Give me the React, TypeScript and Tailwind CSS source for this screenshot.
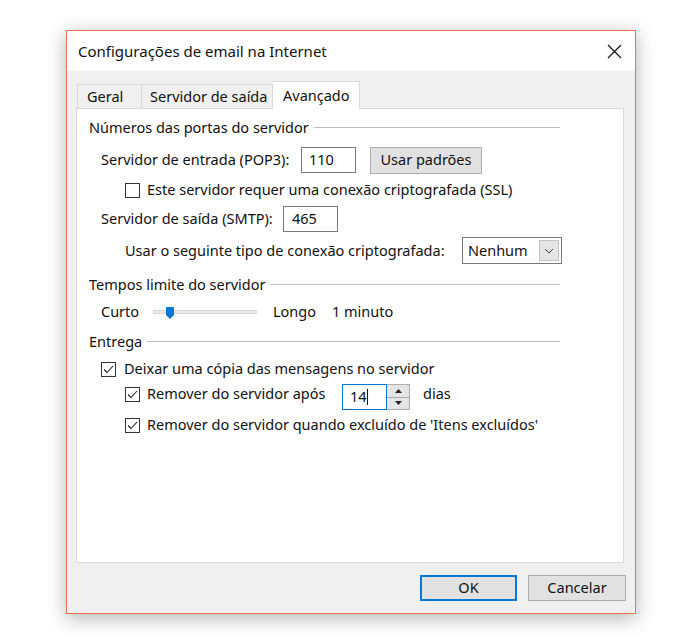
import React from "react";

const font = { fontFamily: '"Noto Sans", "Open Sans", sans-serif' };

function CheckBox({ checked }: { checked?: boolean }) {
  return (
    <div className="w-[15px] h-[15px] border border-[#333] bg-white flex items-center justify-center shrink-0">
      {checked && (
        <svg width="13" height="13" viewBox="0 0 13 13">
          <path d="M2 6.5 L5 9.5 L11 3" fill="none" stroke="#222" strokeWidth="1.1" />
        </svg>
      )}
    </div>
  );
}

function GroupHeading({ label, mt }: { label: string; mt: string }) {
  return (
    <div className={`flex items-center h-[20px] pl-[12px] pr-[63px] ${mt}`}>
      <span className="whitespace-nowrap">{label}</span>
      <div className="flex-1 ml-[5px] h-[2px] border-t border-[#bdbdbd] border-b-white" />
    </div>
  );
}

function TextBox({ value, className }: { value: string; className: string }) {
  return (
    <div className={`h-[26px] border border-[#7a7a7a] bg-white flex items-center pl-[7px] ${className}`}>
      {value}
    </div>
  );
}

export default function App() {
  return (
    <div className="w-[700px] h-[644px] bg-white text-[14.5px] text-[#111] overflow-hidden" style={font}>
      <div className="ml-[66px] mt-[30px] w-[570px] h-[584px] border border-[#e4754f] bg-[#f0f0f0] flex flex-col shadow-[0_4px_18px_rgba(0,0,0,0.3)]">
        {/* title bar */}
        <div className="h-[40px] bg-white flex items-center justify-between pl-[11px] pr-[13px] shrink-0">
          <span className="text-[15px]">Configurações de email na Internet</span>
          <svg width="15" height="15" viewBox="0 0 15 15">
            <path d="M1 1 L14 14 M14 1 L1 14" stroke="#111" strokeWidth="1.2" />
          </svg>
        </div>

        {/* tabs */}
        <div className="mt-[10px] h-[27px] flex items-end pl-[10px] shrink-0 relative z-10">
          <div className="h-[24px] w-[65px] border border-b-0 border-[#d9d9d9] flex items-center pl-[9px]">Geral</div>
          <div className="h-[24px] w-[131px] border border-l-0 border-b-0 border-[#d9d9d9] flex items-center pl-[8px]">
            Servidor de saída
          </div>
          <div className="h-[28px] w-[87px] -mb-px bg-white border border-l-0 border-b-0 border-[#d9d9d9] flex items-start pt-[3px] pl-[10px]">
            Avançado
          </div>
        </div>

        {/* panel */}
        <div className="ml-[9px] w-[548px] h-[455px] bg-white border border-[#d9d9d9] flex flex-col shrink-0">
          <GroupHeading label="Números das portas do servidor" mt="mt-[9px]" />

          <div className="flex items-center h-[26px] mt-[9px] pl-[24px]">
            <span className="w-[200px]">Servidor de entrada (POP3):</span>
            <TextBox value="110" className="w-[55px]" />
            <div className="ml-[14px] w-[112px] h-[27px] bg-[#e1e1e1] border border-[#adadad] flex items-center justify-center">
              Usar padrões
            </div>
          </div>

          <div className="flex items-center h-[18px] mt-[8px] pl-[48px] gap-[7px]">
            <CheckBox />
            <span>Este servidor requer uma conexão criptografada (SSL)</span>
          </div>

          <div className="flex items-center h-[26px] mt-[7px] pl-[24px]">
            <span className="w-[182px]">Servidor de saída (SMTP):</span>
            <TextBox value="465" className="w-[55px] pl-[8px]" />
          </div>

          <div className="flex items-center h-[27px] mt-[5px] pl-[48px]">
            <span className="w-[337px]">Usar o seguinte tipo de conexão criptografada:</span>
            <div className="w-[100px] h-[27px] border border-[#7a7a7a] bg-white flex items-center justify-between pl-[5px] pr-[2px]">
              <span>Nenhum</span>
              <div className="w-[20px] h-[21px] bg-[#e5e5e5] border border-[#c4c4c4] flex items-center justify-center">
                <svg width="10" height="6" viewBox="0 0 10 6">
                  <path d="M1 1 L5 5 L9 1" fill="none" stroke="#444" strokeWidth="1" />
                </svg>
              </div>
            </div>
          </div>

          <GroupHeading label="Tempos limite do servidor" mt="mt-[11px]" />

          <div className="flex items-center h-[20px] mt-[7px] pl-[24px]">
            <span className="w-[52px]">Curto</span>
            <div className="relative w-[104px] h-[4px] bg-[#e7e7e7] border border-[#dadada]">
              <svg className="absolute left-[12px] -top-[4px]" width="8" height="12" viewBox="0 0 8 12">
                <path d="M0 1 Q0 0 1 0 L7 0 Q8 0 8 1 L8 8 L4 12 L0 8 Z" fill="#0078d7" />
              </svg>
            </div>
            <span className="ml-[16px] w-[59px]">Longo</span>
            <span>1 minuto</span>
          </div>

          <GroupHeading label="Entrega" mt="mt-[10px]" />

          <div className="flex items-center h-[18px] mt-[8px] pl-[24px] gap-[8px]">
            <CheckBox checked />
            <span>Deixar uma cópia das mensagens no servidor</span>
          </div>

          <div className="flex items-center h-[26px] mt-[3px] pl-[48px]">
            <CheckBox checked />
            <span className="ml-[7px] w-[195px]">Remover do servidor após</span>
            <div className="flex self-start mt-[3px] h-[26px]">
              <div className="w-[45px] h-[26px] border border-[#0078d7] bg-white flex items-center pl-[7px]">
                14<span className="inline-block w-px h-[16px] bg-[#111]" />
              </div>
              <div className="w-[23px] h-[26px] flex flex-col border border-l-0 border-[#adadad] bg-[#f0f0f0]">
                <div className="flex-1 border-b border-[#adadad] bg-[#e5e5e5] flex items-center justify-center">
                  <svg width="7" height="4" viewBox="0 0 7 4">
                    <path d="M0 4 L3.5 0 L7 4 Z" fill="#222" />
                  </svg>
                </div>
                <div className="flex-1 bg-[#e5e5e5] flex items-center justify-center">
                  <svg width="7" height="4" viewBox="0 0 7 4">
                    <path d="M0 0 L3.5 4 L7 0 Z" fill="#222" />
                  </svg>
                </div>
              </div>
            </div>
            <span className="ml-[13px]">dias</span>
          </div>

          <div className="flex items-center h-[18px] mt-[9px] pl-[48px] gap-[7px]">
            <CheckBox checked />
            <span>Remover do servidor quando excluído de 'Itens excluídos'</span>
          </div>
        </div>

        {/* buttons */}
        <div className="mt-[12px] flex justify-end pr-[9px] gap-[11px] shrink-0">
          <div className="w-[97px] h-[26px] bg-[#e1e1e1] border-2 border-[#0078d7] flex items-center justify-center">OK</div>
          <div className="w-[98px] h-[26px] bg-[#e1e1e1] border border-[#adadad] flex items-center justify-center">Cancelar</div>
        </div>
      </div>
    </div>
  );
}
